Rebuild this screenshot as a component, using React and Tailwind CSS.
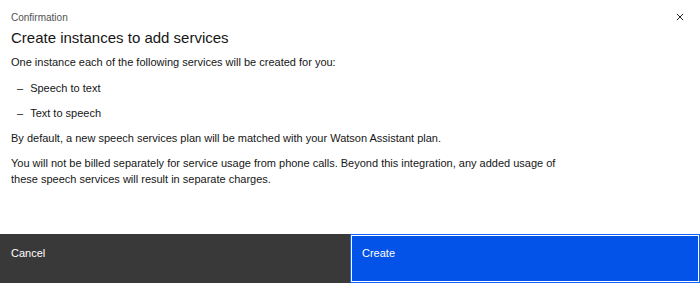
export default function App() {
  return (
    <div className="flex h-[283px] w-[700px] flex-col bg-white font-['Liberation_Sans',Arial,sans-serif] text-[#161616]">
      <div className="relative flex-1 pl-[11px] pr-[20%] pt-[12px]">
        <p className="text-[10px] leading-[12px] text-[#525252]">Confirmation</p>
        <h2 className="mt-[4px] text-[15px] leading-[20px]">Create instances to add services</h2>
        <div className="mt-[6px] text-[11px] leading-[16px]">
          <p>One instance each of the following services will be created for you:</p>
          <ul className="mt-[10px] flex flex-col gap-[9px] pl-[6px]">
            <li className="flex gap-[7px]">
              <span>–</span>
              <span>Speech to text</span>
            </li>
            <li className="flex gap-[7px]">
              <span>–</span>
              <span>Text to speech</span>
            </li>
          </ul>
          <p className="mt-[9px]">By default, a new speech services plan will be matched with your Watson Assistant plan.</p>
          <p className="mt-[9px]">
            You will not be billed separately for service usage from phone calls. Beyond this integration, any added usage of these speech services will result in separate charges.
          </p>
        </div>
        <button className="absolute right-[14px] top-[11px] flex h-[12px] w-[12px] items-center justify-center text-[#161616]">
          <svg viewBox="0 0 16 16" className="h-[10px] w-[10px]" fill="none" stroke="currentColor" strokeWidth="1.5">
            <path d="M3 3l10 10M13 3L3 13" />
          </svg>
        </button>
      </div>
      <div className="grid h-[49px] grid-cols-2 text-[11px] text-white">
        <button className="flex items-start bg-[#393939] pl-[11px] pt-[11px] text-left">Cancel</button>
        <button className="flex items-start border border-[#0f62fe] bg-[#0353e9] pl-[11px] pt-[10px] text-left shadow-[inset_0_0_0_1px_#ffffff,inset_0_0_0_2px_#0353e9]">
          Create
        </button>
      </div>
    </div>
  )
}
